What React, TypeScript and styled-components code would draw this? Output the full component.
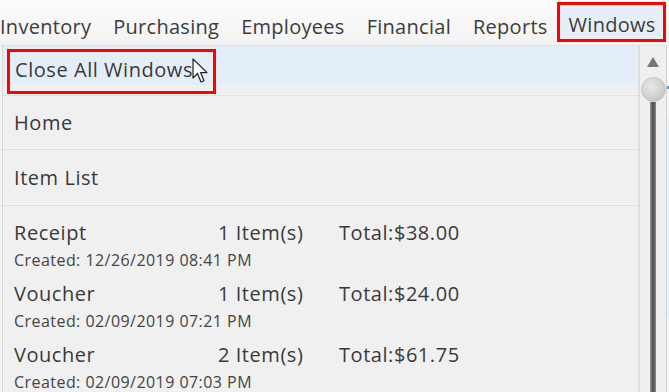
import React from 'react'
import styled, { createGlobalStyle } from 'styled-components'

const GlobalStyle = createGlobalStyle`
  html, body {
    margin: 0;
    padding: 0;
    background: #f4f4f4;
  }
  body {
    width: 669px;
    height: 392px;
    overflow: hidden;
    font-family: 'Open Sans', 'Noto Sans', sans-serif;
    color: #3a3a3a;
  }
`

const Screen = styled.div`
  width: 669px;
  height: 392px;
  display: flex;
  flex-direction: column;
  overflow: hidden;
  background: #f4f4f4;
`

const MenuBar = styled.div`
  height: 46px;
  display: flex;
  align-items: stretch;
  background: linear-gradient(#fbfbfb, #f3f3f3);
  border-bottom: 1px solid #e2e2e2;
  box-sizing: border-box;
`

const MenuItem = styled.div<{ $active?: boolean; $first?: boolean }>`
  display: flex;
  align-items: center;
  padding: 8px 11px 0 ${({ $first }) => ($first ? '0' : '11px')};
  font-size: 20px;
  letter-spacing: 0.28px;
  color: #3c3c3c;
  box-sizing: border-box;
  ${({ $active }) =>
    $active &&
    `
    margin: 2px 0 3px -2px;
    padding: 4px 10px 0 12px;
    background: #e6eff8;
    outline: 3px solid #ff0000;
    outline-offset: -3px;
  `}
`

const Body = styled.div`
  flex: 1;
  display: flex;
  min-height: 0;
`

const Dropdown = styled.div`
  margin-left: 2px;
  width: 635px;
  display: flex;
  flex-direction: column;
  background: #f0f0f0;
  border-left: 1px solid #d6d6d6;
  border-right: 1px solid #e0e0e0;
`

const Row = styled.div<{ $h: number; $hover?: boolean }>`
  height: ${({ $h }) => $h}px;
  box-sizing: border-box;
  display: flex;
  flex-direction: column;
  justify-content: center;
  padding-left: 11px;
  border-bottom: 1px solid #e0e0e0;
  box-shadow: inset 0 -1px 0 #fbfbfb;
  ${({ $hover }) =>
    $hover &&
    `
    justify-content: flex-start;
    padding-top: 3px;
    padding-left: 4px;
    background: linear-gradient(#e4eef8 0, #e4eef8 39px, #f0f0f0 39px);
  `}
`

const Title = styled.span<{ $marked?: boolean }>`
  font-size: 20px;
  letter-spacing: 0.55px;
  color: #3a3a3a;
  position: relative;
  ${({ $marked }) =>
    $marked &&
    `
    display: inline-block;
    align-self: flex-start;
    padding: 4px 20px 8px 5px;
    border: 3px solid #ff0000;
  `}
`

const DocRow = styled.div`
  height: 61px;
  flex-shrink: 0;
  box-sizing: border-box;
  padding: 14px 0 0 11px;
  display: flex;
  flex-direction: column;
`

const DocLine = styled.div`
  display: grid;
  grid-template-columns: 204px 121px 1fr;
  font-size: 20px;
  letter-spacing: 0.55px;
  line-height: 26px;
  color: #3a3a3a;
`

const Created = styled.div`
  margin-top: 4px;
  font-size: 16px;
  letter-spacing: 0.45px;
  line-height: 20px;
  color: #444;
`

const Cursor = styled.svg`
  position: absolute;
  left: 182px;
  top: 6px;
`

const ScrollBar = styled.div`
  width: 26px;
  display: flex;
  flex-direction: column;
  align-items: center;
  background: #efefef;
  border-left: 1px solid #dcdcdc;
  border-right: 1px solid #d2d2d2;
`

const Arrow = styled.div`
  margin-top: 11px;
  width: 0;
  height: 0;
  border-left: 6px solid transparent;
  border-right: 6px solid transparent;
  border-bottom: 10px solid #777;
`

const Thumb = styled.div`
  margin-top: 10px;
  width: 25px;
  height: 25px;
  border-radius: 50%;
  background: radial-gradient(circle at 40% 35%, #e8e8e8, #bdbdbd);
  border: 1px solid #c4c4c4;
  box-sizing: border-box;
`

const Track = styled.div`
  flex: 1;
  width: 6px;
  background: linear-gradient(90deg, #9a9a9a, #4a4a4a 50%, #8a8a8a);
`

const Behind = styled.div`
  flex: 1;
  display: flex;
  flex-direction: column;
  background: #f7f7f7;
`

const BehindBand = styled.div<{ $h: number; $bg: string }>`
  height: ${({ $h }) => $h}px;
  background: ${({ $bg }) => $bg};
`

const docs = [
  { kind: 'Receipt', items: '1 Item(s)', total: 'Total:$38.00', created: 'Created: 12/26/2019 08:41 PM' },
  { kind: 'Voucher', items: '1 Item(s)', total: 'Total:$24.00', created: 'Created: 02/09/2019 07:21 PM' },
  { kind: 'Voucher', items: '2 Item(s)', total: 'Total:$61.75', created: 'Created: 02/09/2019 07:03 PM' }
]

const menus = ['Inventory', 'Purchasing', 'Employees', 'Financial', 'Reports', 'Windows']

export default function App() {
  return (
    <Screen>
      <GlobalStyle />
      <MenuBar>
        {menus.map((m, i) => (
          <MenuItem key={m} $first={i === 0} $active={m === 'Windows'}>
            {m}
          </MenuItem>
        ))}
      </MenuBar>
      <Body>
        <Dropdown>
          <Row $h={50} $hover>
            <Title $marked>
              Close All Windows
              <Cursor width="18" height="26" viewBox="0 0 18 26">
                <path d="M1 1 L1 20 L5.5 15.5 L9 24 L12 22.8 L8.6 14.6 L15 14.6 Z" fill="#fff" stroke="#222" strokeWidth="1.2" strokeLinejoin="round" />
              </Cursor>
            </Title>
          </Row>
          <Row $h={54}>
            <Title>Home</Title>
          </Row>
          <Row $h={56}>
            <Title>Item List</Title>
          </Row>
          {docs.map((d, i) => (
            <DocRow key={i}>
              <DocLine>
                <span>{d.kind}</span>
                <span>{d.items}</span>
                <span>{d.total}</span>
              </DocLine>
              <Created>{d.created}</Created>
            </DocRow>
          ))}
        </Dropdown>
        <ScrollBar>
          <Arrow />
          <Thumb />
          <Track />
        </ScrollBar>
        <Behind>
          <BehindBand $h={40} $bg="#fafafa" />
          <BehindBand $h={3} $bg="#5b8fd8" />
          <BehindBand $h={30} $bg="#f7f7f7" />
          <BehindBand $h={200} $bg="#e8f2fb" />
        </Behind>
      </Body>
    </Screen>
  )
}
